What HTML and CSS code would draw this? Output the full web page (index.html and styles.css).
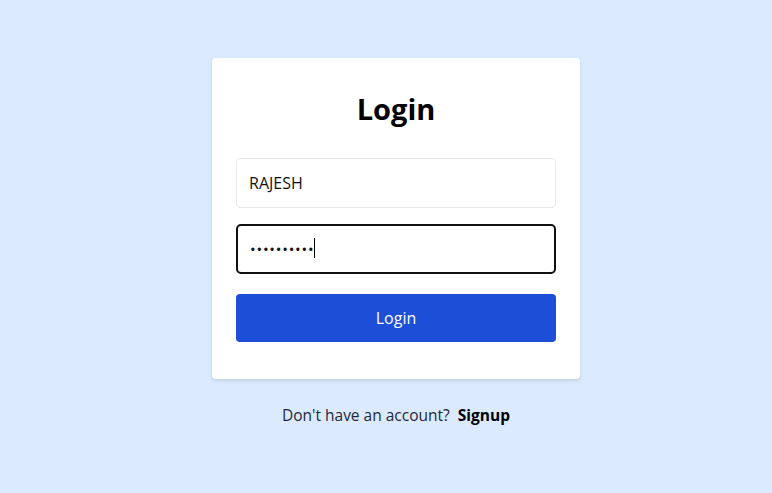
FILE: index.html
```html
<!DOCTYPE html>
<html lang="en">
<head>
<meta charset="utf-8">
<title>Login</title>
<link rel="stylesheet" href="styles.css">
</head>
<body>
<main class="page">
  <form class="card">
    <h1 class="title">Login</h1>
    <input class="field" type="text" value="RAJESH">
    <div class="pw-wrap">
      <input class="field field-focus" type="password" value="1234567890">
      <span class="caret"></span>
    </div>
    <button class="btn" type="button">Login</button>
  </form>
  <p class="foot">Don't have an account? <a class="link" href="#">Signup</a></p>
</main>
</body>
</html>
```
FILE: styles.css
```css
* { box-sizing: border-box; }
html, body { margin: 0; padding: 0; }
body {
  background: #dbeafe;
  font-family: "Open Sans", "Noto Sans", sans-serif;
  color: #111;
  height: 493px;
}
.page {
  display: flex;
  flex-direction: column;
  align-items: center;
  padding-top: 58px;
  padding-left: 20px;
}
.card {
  width: 368px;
  background: #fff;
  border-radius: 4px;
  box-shadow: 0 2px 4px rgba(0,0,0,0.08), 0 1px 2px rgba(0,0,0,0.05);
  padding: 28px 24px 37px;
  display: flex;
  flex-direction: column;
}
.title {
  margin: 0 0 26px;
  text-align: center;
  font-size: 29px;
  line-height: 46px;
  font-weight: 700;
  color: #000;
}
.field {
  display: block;
  height: 50px;
  width: 100%;
  border: 1px solid #e5e7eb;
  border-radius: 4px;
  padding: 0 12px;
  font-family: inherit;
  font-size: 16px;
  color: #111;
  background: #fff;
  outline: none;
}
.pw-wrap {
  position: relative;
  margin-top: 16px;
}
.field-focus {
  border: 2px solid #111;
  border-radius: 5px;
  font-size: 15px;
  letter-spacing: 0.8px;
}
.caret {
  position: absolute;
  left: 78px;
  top: 14px;
  width: 1px;
  height: 20px;
  background: #000;
}
.btn {
  margin-top: 20px;
  height: 48px;
  width: 100%;
  border: none;
  border-radius: 4px;
  background: #1d4ed8;
  color: #fff;
  font-family: inherit;
  font-size: 16px;
}
.foot {
  margin: 25px 0 0;
  font-size: 15.5px;
  color: #1f2937;
}
.link {
  color: #000;
  font-weight: 700;
  text-decoration: none;
  margin-left: 4px;
}
```
